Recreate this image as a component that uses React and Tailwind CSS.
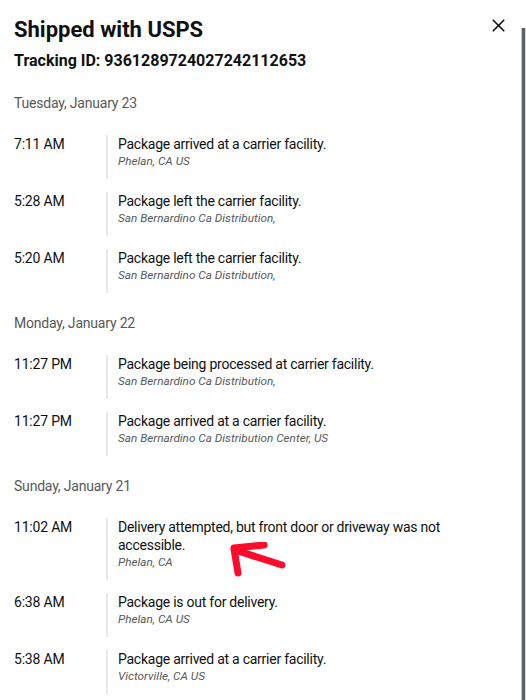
import { X } from 'lucide-react';

const days = [
  {
    label: 'Tuesday, January 23',
    events: [
      { time: '7:11 AM', text: 'Package arrived at a carrier facility.', place: 'Phelan, CA US' },
      { time: '5:28 AM', text: 'Package left the carrier facility.', place: 'San Bernardino Ca Distribution,' },
      { time: '5:20 AM', text: 'Package left the carrier facility.', place: 'San Bernardino Ca Distribution,' },
    ],
  },
  {
    label: 'Monday, January 22',
    events: [
      { time: '11:27 PM', text: 'Package being processed at carrier facility.', place: 'San Bernardino Ca Distribution,' },
      { time: '11:27 PM', text: 'Package arrived at a carrier facility.', place: 'San Bernardino Ca Distribution Center, US' },
    ],
  },
  {
    label: 'Sunday, January 21',
    events: [
      { time: '11:02 AM', text: 'Delivery attempted, but front door or driveway was not accessible.', place: 'Phelan, CA', arrow: true },
      { time: '6:38 AM', text: 'Package is out for delivery.', place: 'Phelan, CA US' },
      { time: '5:38 AM', text: 'Package arrived at a carrier facility.', place: 'Victorville, CA US' },
    ],
  },
];

function RedArrow() {
  return (
    <svg className="absolute left-[118px] top-[24px]" width="64" height="36" viewBox="0 0 64 36" fill="none">
      <path d="M8 6 L38 3 M8 7 L12 31 M9 8 L56 23" stroke="#ff0a2a" strokeWidth="7" strokeLinecap="round" strokeLinejoin="round" />
    </svg>
  );
}

export default function App() {
  return (
    <div className="flex h-[700px] w-[526px] overflow-hidden bg-white" style={{ fontFamily: 'Roboto, "Liberation Sans", sans-serif' }}>
      <div className="w-[521px] shrink-0 bg-white pl-[14px] pr-[12px] text-[#0f1111]">
        {/* Header */}
        <div className="flex items-start justify-between pt-[16px]">
          <h1 className="text-[22px] leading-[28px] font-bold">Shipped with USPS</h1>
          <button className="-mt-[1px] text-[#0f1111]">
            <X size={21} strokeWidth={1.9} />
          </button>
        </div>
        <p className="mt-[6px] text-[16px] leading-[22px] font-bold">Tracking ID: 9361289724027242112653</p>

        {/* Timeline */}
        <div className="mt-[21px]">
          {days.map(day => (
            <div key={day.label} className="mb-[20px]">
              <p className="text-[14px] leading-[20px] text-[#565959] tracking-[-0.2px]">{day.label}</p>
              <div className="mt-[22px]">
                {day.events.map((ev, i) => (
                  <div key={i} className="flex mb-[13px]">
                    <div className="w-[92px] shrink-0 text-[14px] leading-[18px] tracking-[-0.2px]">{ev.time}</div>
                    <div className="relative flex-1 border-l-2 border-[#e7e9e9] pl-[10px] pb-[10px]">
                      <p className="text-[14px] leading-[18px] pr-[34px] tracking-[-0.25px]">{ev.text}</p>
                      <p className="text-[11.75px] leading-[16px] italic text-[#565959]">{ev.place}</p>
                      {ev.arrow && <RedArrow />}
                    </div>
                  </div>
                ))}
              </div>
            </div>
          ))}
        </div>
      </div>
      <div className="flex flex-1 flex-col pt-[28px]">
        <div className="flex flex-1">
          <div className="w-[1px] bg-[#c9c9c9]" />
          <div className="w-[3px] bg-[#5e6266]" />
          <div className="flex-1 bg-[#d8d8d8]" />
        </div>
      </div>
    </div>
  );
}
